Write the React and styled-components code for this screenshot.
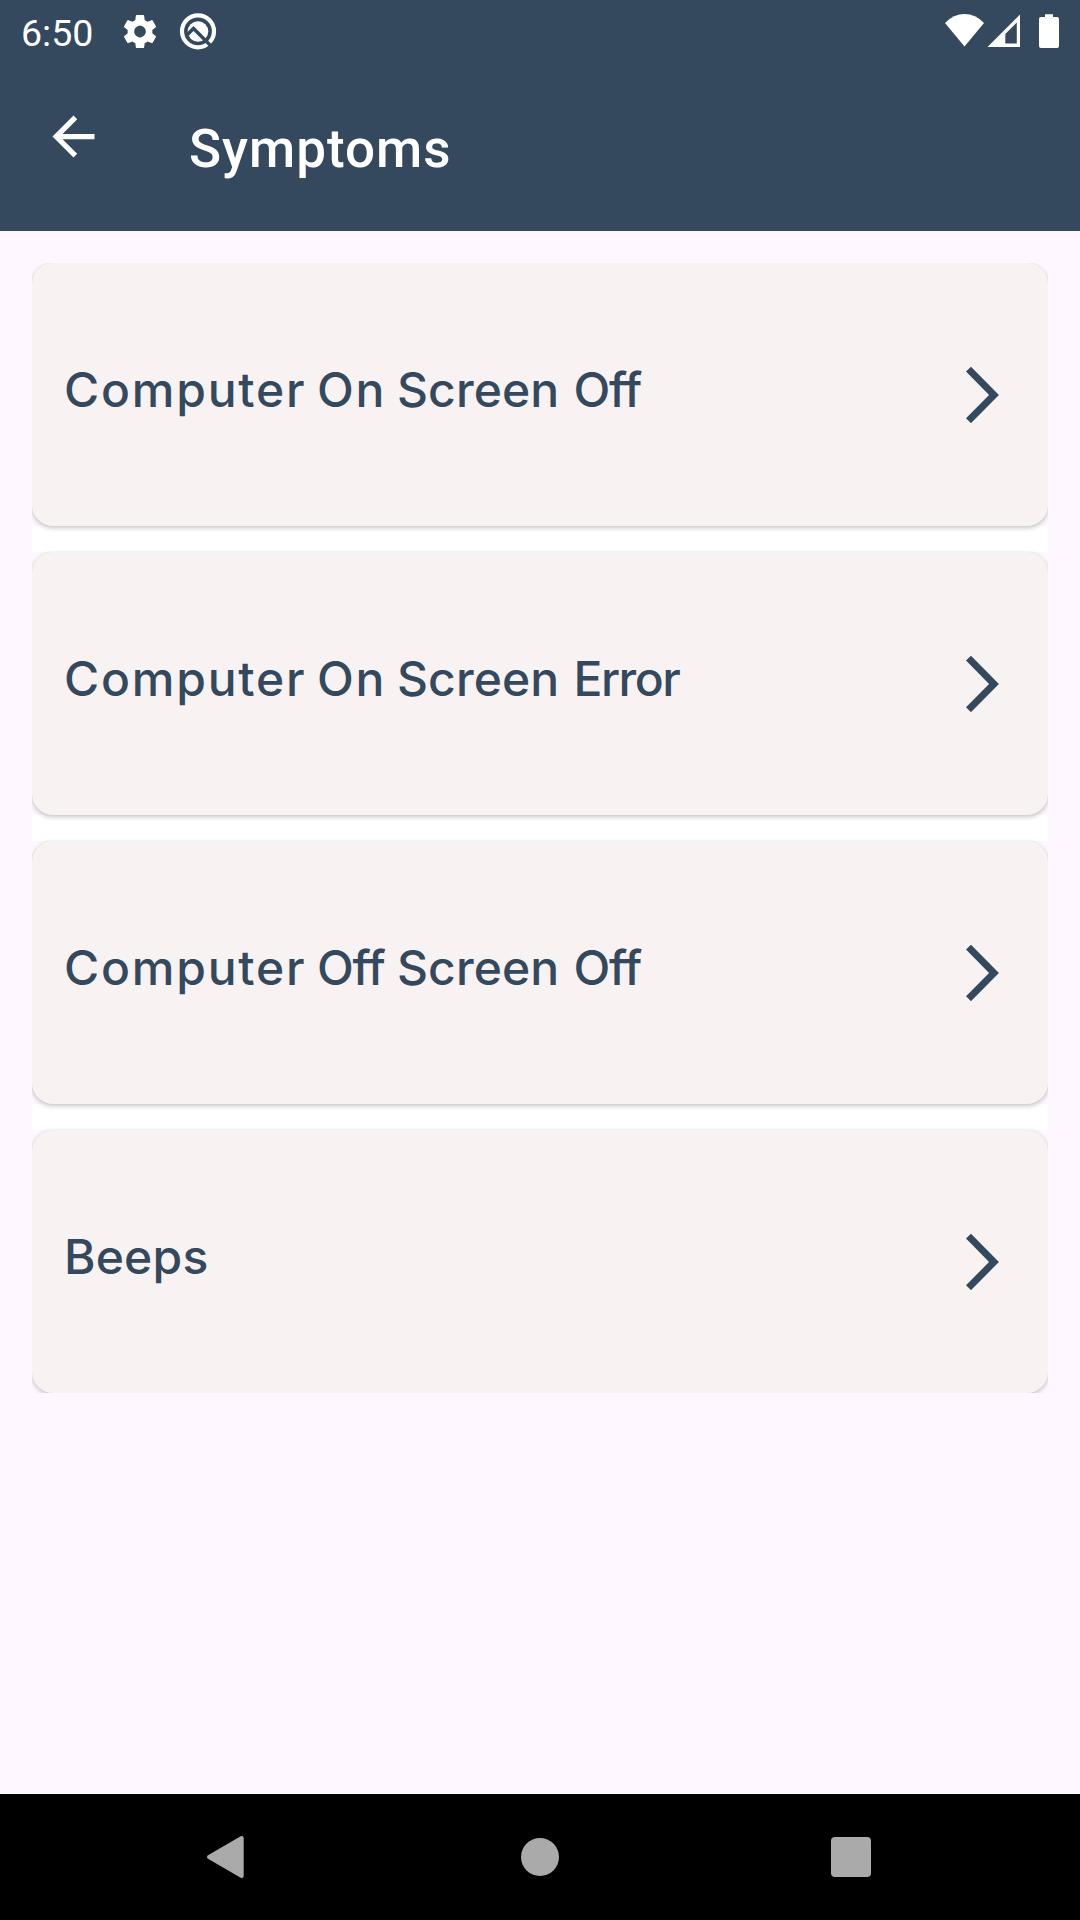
import React from "react";
import styled, { createGlobalStyle } from "styled-components";

const NAVY = "#34495e";

const GlobalStyle = createGlobalStyle`
  * { box-sizing: border-box; }
  body { margin: 0; background: #fef7ff; }
`;

const Screen = styled.div`
  display: flex;
  flex-direction: column;
  width: 1080px;
  height: 1920px;
  background: #fef7ff;
  font-family: Roboto, sans-serif;
  overflow: hidden;
`;

const StatusBar = styled.div`
  display: flex;
  align-items: center;
  height: 63px;
  padding: 0 21px;
  background: ${NAVY};
  color: #fff;
`;

const Clock = styled.span`
  width: 99px;
  font-size: 37.5px;
  line-height: 43px;
  padding-top: 3px;
`;

const StatusIcon = styled.svg`
  flex: none;
  display: block;
  width: ${(p) => p.$w}px;
  height: 63px;
  margin-left: ${(p) => p.$gap || 0}px;
`;

const Spacer = styled.div`
  flex: 1;
`;

const Toolbar = styled.header`
  display: flex;
  align-items: flex-start;
  height: 168px;
  background: ${NAVY};
  color: #fff;
`;

const BackButton = styled.button`
  display: flex;
  width: 189px;
  height: 147px;
  padding: 42px 0 0 42px;
  border: 0;
  background: none;
  color: inherit;
`;

const Title = styled.h1`
  margin: 55px 0 0;
  font-size: 53px;
  line-height: 62px;
  font-weight: 500;
  letter-spacing: 1px;
`;

const Main = styled.main`
  flex: 1;
  padding: 32px;
`;

const List = styled.div`
  display: flex;
  flex-direction: column;
  overflow: hidden;
`;

const Divider = styled.div`
  height: 26px;
  background: #fff;
`;

const Card = styled.div`
  display: flex;
  align-items: center;
  justify-content: space-between;
  height: 263px;
  padding: 0 48px 0 32px;
  border-radius: 21px;
  background: #f8f2f2;
  color: ${NAVY};
  z-index: 1;
  box-shadow: 0 2px 5px rgba(0, 0, 0, 0.22), 0 0 3px rgba(0, 0, 0, 0.05);
`;

const Label = styled.div`
  display: flex;
  font-family: Inter, sans-serif;
  font-size: 48px;
  line-height: 56px;
  font-weight: 500;
  padding-bottom: 10px;
`;

const Word = styled.span`
  width: ${(p) => p.$w}px;
  letter-spacing: ${(p) => p.$tracking}px;
  white-space: nowrap;
`;

const Chevron = styled.svg`
  display: block;
  width: 34px;
  height: 57px;
`;

const NavBar = styled.nav`
  display: flex;
  height: 126px;
  background: #000;
`;

const NavButton = styled.button`
  display: flex;
  align-items: center;
  justify-content: center;
  width: ${(p) => p.$w}px;
  height: 126px;
  padding: 0;
  border: 0;
  background: none;
`;

const WORDS = {
  Computer: { width: 253, tracking: 1.8 },
  On: { width: 80, tracking: 1.7 },
  Off: { width: 80, tracking: -1.3 },
  Screen: { width: 176.5, tracking: 0.1 },
  Error: { width: 120, tracking: -1.5 },
  Beeps: { width: 160, tracking: 0.2 },
};

const SYMPTOMS = [
  "Computer On Screen Off",
  "Computer On Screen Error",
  "Computer Off Screen Off",
  "Beeps",
];

function SymptomCard({ name }) {
  return (
    <Card>
      <Label>
        {name.split(" ").map((w, i) => (
          <Word key={i} $w={WORDS[w].width} $tracking={WORDS[w].tracking}>
            {w}
          </Word>
        ))}
      </Label>
      <Chevron viewBox="0 0 34 57">
        <path d="M2.500 3.100 L28 29 L2.500 54.700" fill="none" stroke="currentColor" strokeWidth="7" />
      </Chevron>
    </Card>
  );
}

export default function App() {
  return (
    <Screen>
      <GlobalStyle />
      <StatusBar>
        <Clock>6:50</Clock>
        <StatusIcon $w={40} viewBox="0 0 40 63">
          <path
            transform="translate(0.2 11.8) scale(1.65)"
            fill="#fff"
            d="M19.43 12.98c.04-.32.07-.64.07-.98s-.03-.66-.07-.98l2.11-1.65c.19-.15.24-.42.12-.64l-2-3.46c-.12-.22-.39-.3-.61-.22l-2.49 1c-.52-.4-1.08-.73-1.69-.98l-.38-2.65C14.46 2.18 14.25 2 14 2h-4c-.25 0-.46.18-.49.42l-.38 2.65c-.61.25-1.17.59-1.69.98l-2.49-1c-.23-.09-.49 0-.61.22l-2 3.46c-.13.22-.07.49.12.64l2.11 1.65c-.04.32-.07.65-.07.98s.03.66.07.98l-2.11 1.65c-.19.15-.24.42-.12.64l2 3.46c.12.22.39.3.61.22l2.49-1c.52.4 1.08.73 1.69.98l.38 2.65c.03.24.24.42.49.42h4c.25 0 .46-.18.49-.42l.38-2.65c.61-.25 1.17-.59 1.69-.98l2.49 1c.23.09.49 0 .61-.22l2-3.46c.12-.22.07-.49-.12-.64l-2.11-1.65zM12 15.5c-1.93 0-3.5-1.57-3.5-3.5s1.57-3.5 3.5-3.5 3.5 1.57 3.5 3.5-1.57 3.5-3.5 3.5z"
          />
        </StatusIcon>
        <StatusIcon $w={40} $gap={18} viewBox="0 0 40 63">
          <circle cx="20" cy="31.3" r="16" fill="none" stroke="#fff" strokeWidth="4.2" />
          <circle cx="20" cy="31.5" r="10.3" fill="#fff" />
          <path d="M8.500 35.500 L15.500 28.500 L33 46" fill="none" stroke={NAVY} strokeWidth="3.4" />
        </StatusIcon>
        <Spacer />
        <StatusIcon $w={40} viewBox="0 0 40 63">
          <path fill="#fff" d="M20.500 46.500 L1 23 Q9.500 14 20.500 14 Q31.500 14 40 23 Z" />
        </StatusIcon>
        <StatusIcon $w={33} $gap={3} viewBox="0 0 33 63">
          <path fill="#fff" fillRule="evenodd" d="M0.500 47 L33 14.500 V47 Z M18.300 43.500 H29.800 V22.500 L18.300 34 Z" />
        </StatusIcon>
        <StatusIcon $w={20} $gap={19} viewBox="0 0 20 63">
          <path fill="#fff" d="M6 14.300 H14 V17 H18 Q20 17 20 19 V46 Q20 48 18 48 H2 Q0 48 0 46 V19 Q0 17 2 17 H6 Z" />
        </StatusIcon>
      </StatusBar>
      <Toolbar>
        <BackButton aria-label="Back">
          <svg width="63" height="63" viewBox="0 0 24 24">
            <path fill="currentColor" d="M20 11H7.830l5.590-5.590L12 4l-8 8 8 8 1.410-1.410L7.830 13H20v-2z" />
          </svg>
        </BackButton>
        <Title>Symptoms</Title>
      </Toolbar>
      <Main>
        <List>
          {SYMPTOMS.map((name, i) => (
            <React.Fragment key={name}>
              {i > 0 && <Divider />}
              <SymptomCard name={name} />
            </React.Fragment>
          ))}
        </List>
      </Main>
      <NavBar>
        <NavButton $w={452} aria-label="Back">
          <svg width="40" height="44" viewBox="0 0 40 44">
            <path d="M35.700 3 V41 L3 22 Z" fill="#aaa" stroke="#aaa" strokeWidth="4" strokeLinejoin="round" />
          </svg>
        </NavButton>
        <NavButton $w={176} aria-label="Home">
          <svg width="40" height="40" viewBox="0 0 40 40">
            <circle cx="20" cy="20" r="19" fill="#aaa" />
          </svg>
        </NavButton>
        <NavButton $w={446} aria-label="Overview">
          <svg width="40" height="40" viewBox="0 0 40 40">
            <rect width="40" height="40" rx="4" fill="#aaa" />
          </svg>
        </NavButton>
      </NavBar>
    </Screen>
  );
}
